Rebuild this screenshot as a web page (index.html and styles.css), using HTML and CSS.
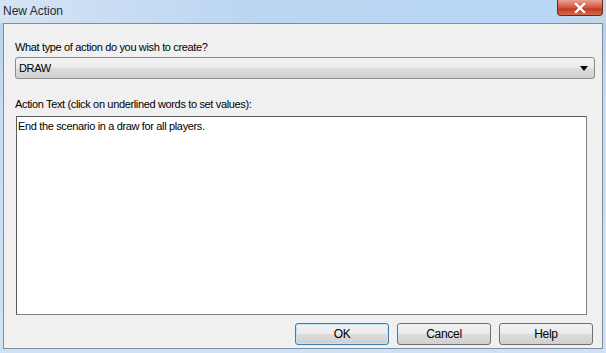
FILE: index.html
```html
<!DOCTYPE html>
<html lang="en">
<head>
  <meta charset="UTF-8" />
  <title>New Action</title>
  <link rel="stylesheet" href="styles.css">
</head>
<body>

  <div class="window">
    <div class="titlebar">
      <span class="title">New Action</span>
      <div class="close-button">
        <svg width="14" height="10" viewBox="0 0 14 10">
          <path d="M3 1 L11 9 M11 1 L3 9" stroke="#fff" stroke-width="2.4" stroke-linecap="square"/>
        </svg>
      </div>
    </div>

    <div class="client">
      <label class="field-label">What type of action do you wish to create?</label>
      <div class="dropdown">
        <span>DRAW</span>
        <svg class="arrow" width="8" height="5" viewBox="0 0 8 5">
          <path d="M0 0 H8 L4 5 Z" fill="#000"/>
        </svg>
      </div>

      <label class="field-label second">Action Text (click on underlined words to set values):</label>
      <div class="action-text">End the scenario in a draw for all players.</div>

      <div class="button-row">
        <button class="btn default">OK</button>
        <button class="btn">Cancel</button>
        <button class="btn">Help</button>
      </div>
    </div>
  </div>

</body>
</html>
```

FILE: styles.css
```css
body {
  margin: 0;
  font-family: 'Liberation Sans', Arial, sans-serif;
  font-size: 11px;
  letter-spacing: -0.35px;
  color: #000;
}

.window {
  width: 606px;
  height: 353px;
  display: flex;
  flex-direction: column;
  background: linear-gradient(to bottom, #b4cde8, #c6dcf2 30%, #cfe2f5);
  box-sizing: border-box;
}

.titlebar {
  height: 24px;
  display: flex;
  justify-content: space-between;
  align-items: flex-start;
  background: linear-gradient(to right, #d4e4f4 0%, #bcd6f2 40%, #b8d6f6 90%, #c4d6e8 100%);
}

.title {
  padding: 4px 0 0 3px;
  font-size: 12px;
  letter-spacing: 0;
  color: #2a2a2a;
}

.close-button {
  width: 44px;
  height: 15px;
  margin-right: 3px;
  border: 1px solid #6b2a20;
  border-top: none;
  border-radius: 0 0 4px 4px;
  background: linear-gradient(to bottom, #e8a393, #d2553d 50%, #c13b22 60%, #d46b50);
  display: flex;
  align-items: center;
  justify-content: center;
}

.client {
  flex: 1;
  margin: 0 3px 4px 3px;
  border: 1px solid #7f8da0;
  background: #f0f0f0;
  padding: 16px 9px 3px 11px;
  display: flex;
  flex-direction: column;
}

.field-label {
  display: block;
  line-height: 14px;
}

.field-label.second {
  margin-top: 18px;
}

.dropdown {
  margin-top: 3px;
  height: 20px;
  width: 571px;
  border: 1px solid #8a8a8a;
  border-radius: 3px;
  background: linear-gradient(to bottom, #f2f2f2 0%, #ebebeb 50%, #dddddd 51%, #cfcfcf 100%);
  display: flex;
  align-items: center;
  justify-content: space-between;
  padding: 0 4px 0 3px;
  box-sizing: content-box;
}

.arrow {
  margin-right: 2px;
}

.action-text {
  margin-top: 5px;
  margin-left: 1px;
  width: 567px;
  height: 193px;
  background: #fff;
  border: 1px solid #828282;
  border-top-color: #5a5a5a;
  border-left-color: #5a5a5a;
  padding: 2px 1px;
  line-height: 14px;
}

.button-row {
  margin-top: 8px;
  display: flex;
  justify-content: flex-end;
  gap: 8px;
}

.btn {
  width: 94px;
  height: 22px;
  font-family: 'Liberation Sans', Arial, sans-serif;
  font-size: 12px;
  letter-spacing: -0.3px;
  color: #000;
  border: 1px solid #707070;
  border-radius: 3px;
  background: linear-gradient(to bottom, #f2f2f2 0%, #ebebeb 50%, #dddddd 51%, #cfcfcf 100%);
  padding: 0;
}

.btn.default {
  border-color: #3c7fb1;
  box-shadow: inset 0 0 0 1px #c0e4f6;
}
```
